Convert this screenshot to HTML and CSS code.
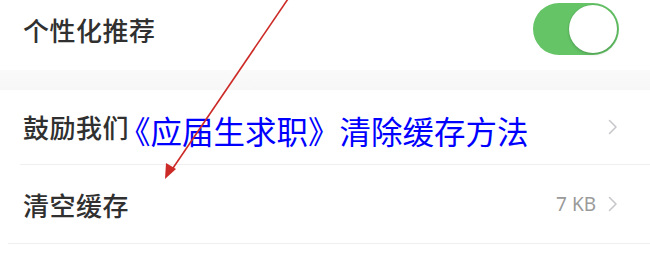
FILE: index.html
```html
<!DOCTYPE html>
<html lang="zh-CN">
<head>
<meta charset="utf-8">
<link rel="stylesheet" href="styles.css">
</head>
<body>
<div class="page">
  <div class="row top">
    <span class="label">个性化推荐</span>
    <span class="toggle"><span class="knob"></span></span>
  </div>
  <div class="spacer"></div>
  <div class="band"></div>
  <div class="row r2">
    <span class="label">鼓励我们</span>
    <svg class="chev" width="10" height="16" viewBox="0 0 10 16"><polyline points="1.5,1.5 8,8 1.5,14.5" fill="none" stroke="#c8c8cc" stroke-width="1.6" stroke-linecap="round" stroke-linejoin="round"/></svg>
  </div>
  <div class="divider inset"></div>
  <div class="row r3">
    <span class="label">清空缓存</span>
    <span class="right"><span class="size">7 KB</span>
    <svg class="chev" width="10" height="16" viewBox="0 0 10 16"><polyline points="1.5,1.5 8,8 1.5,14.5" fill="none" stroke="#c8c8cc" stroke-width="1.6" stroke-linecap="round" stroke-linejoin="round"/></svg></span>
  </div>
  <div class="divider"></div>

  <div class="overlay-title">《应届生求职》清除缓存方法</div>
  <svg class="arrow" width="650" height="260" viewBox="0 0 650 260">
    <line x1="290" y1="-4" x2="171" y2="171" stroke="#cc2a27" stroke-width="1.6"/>
    <polygon points="165,179 166,163 176,169" fill="#cc2a27"/>
  </svg>
</div>
</body>
</html>
```
FILE: styles.css
```css
html, body {
  margin: 0;
  padding: 0;
  background: #ffffff;
}
.page {
  position: relative;
  width: 650px;
  height: 260px;
  overflow: hidden;
  font-family: "Noto Sans CJK SC", "Noto Sans", sans-serif;
}
.row {
  display: flex;
  align-items: center;
  justify-content: space-between;
  padding: 0 31px 0 23px;
}
.label {
  font-size: 26px;
  font-weight: 500;
  color: #303030;
  letter-spacing: 0.5px;
}
.top {
  height: 58px;
}
.toggle {
  position: relative;
  display: block;
  width: 86px;
  height: 52px;
  border-radius: 26px;
  background: #64c466;
}
.knob {
  position: absolute;
  right: 2px;
  top: 2px;
  width: 48px;
  height: 48px;
  border-radius: 50%;
  background: #ffffff;
  box-shadow: 0 0 0 1px rgba(0,0,0,0.06), 0 2px 3px rgba(0,0,0,0.12);
}
.spacer {
  height: 12px;
}
.band {
  height: 20px;
  background: linear-gradient(#fafafa, #f7f7f7);
}
.r2 {
  height: 74px;
  padding-right: 32px;
}
.r3 {
  height: 78px;
  padding-right: 32px;
}
.r2 .label { margin-top: -2px; }
.right {
  display: flex;
  align-items: center;
  gap: 12px;
}
.size {
  font-family: "Noto Sans", "Liberation Sans", sans-serif;
  font-size: 19px;
  color: #9a9a9a;
}
.divider {
  height: 1px;
  background: #efefef;
  margin-left: 8px;
}
.divider.inset {
  margin-left: 20px;
}
.overlay-title {
  position: absolute;
  left: 119px;
  top: 110px;
  font-size: 31.5px;
  line-height: 40px;
  color: #0000ff;
  white-space: nowrap;
}
.arrow {
  position: absolute;
  left: 0;
  top: 0;
}
```
